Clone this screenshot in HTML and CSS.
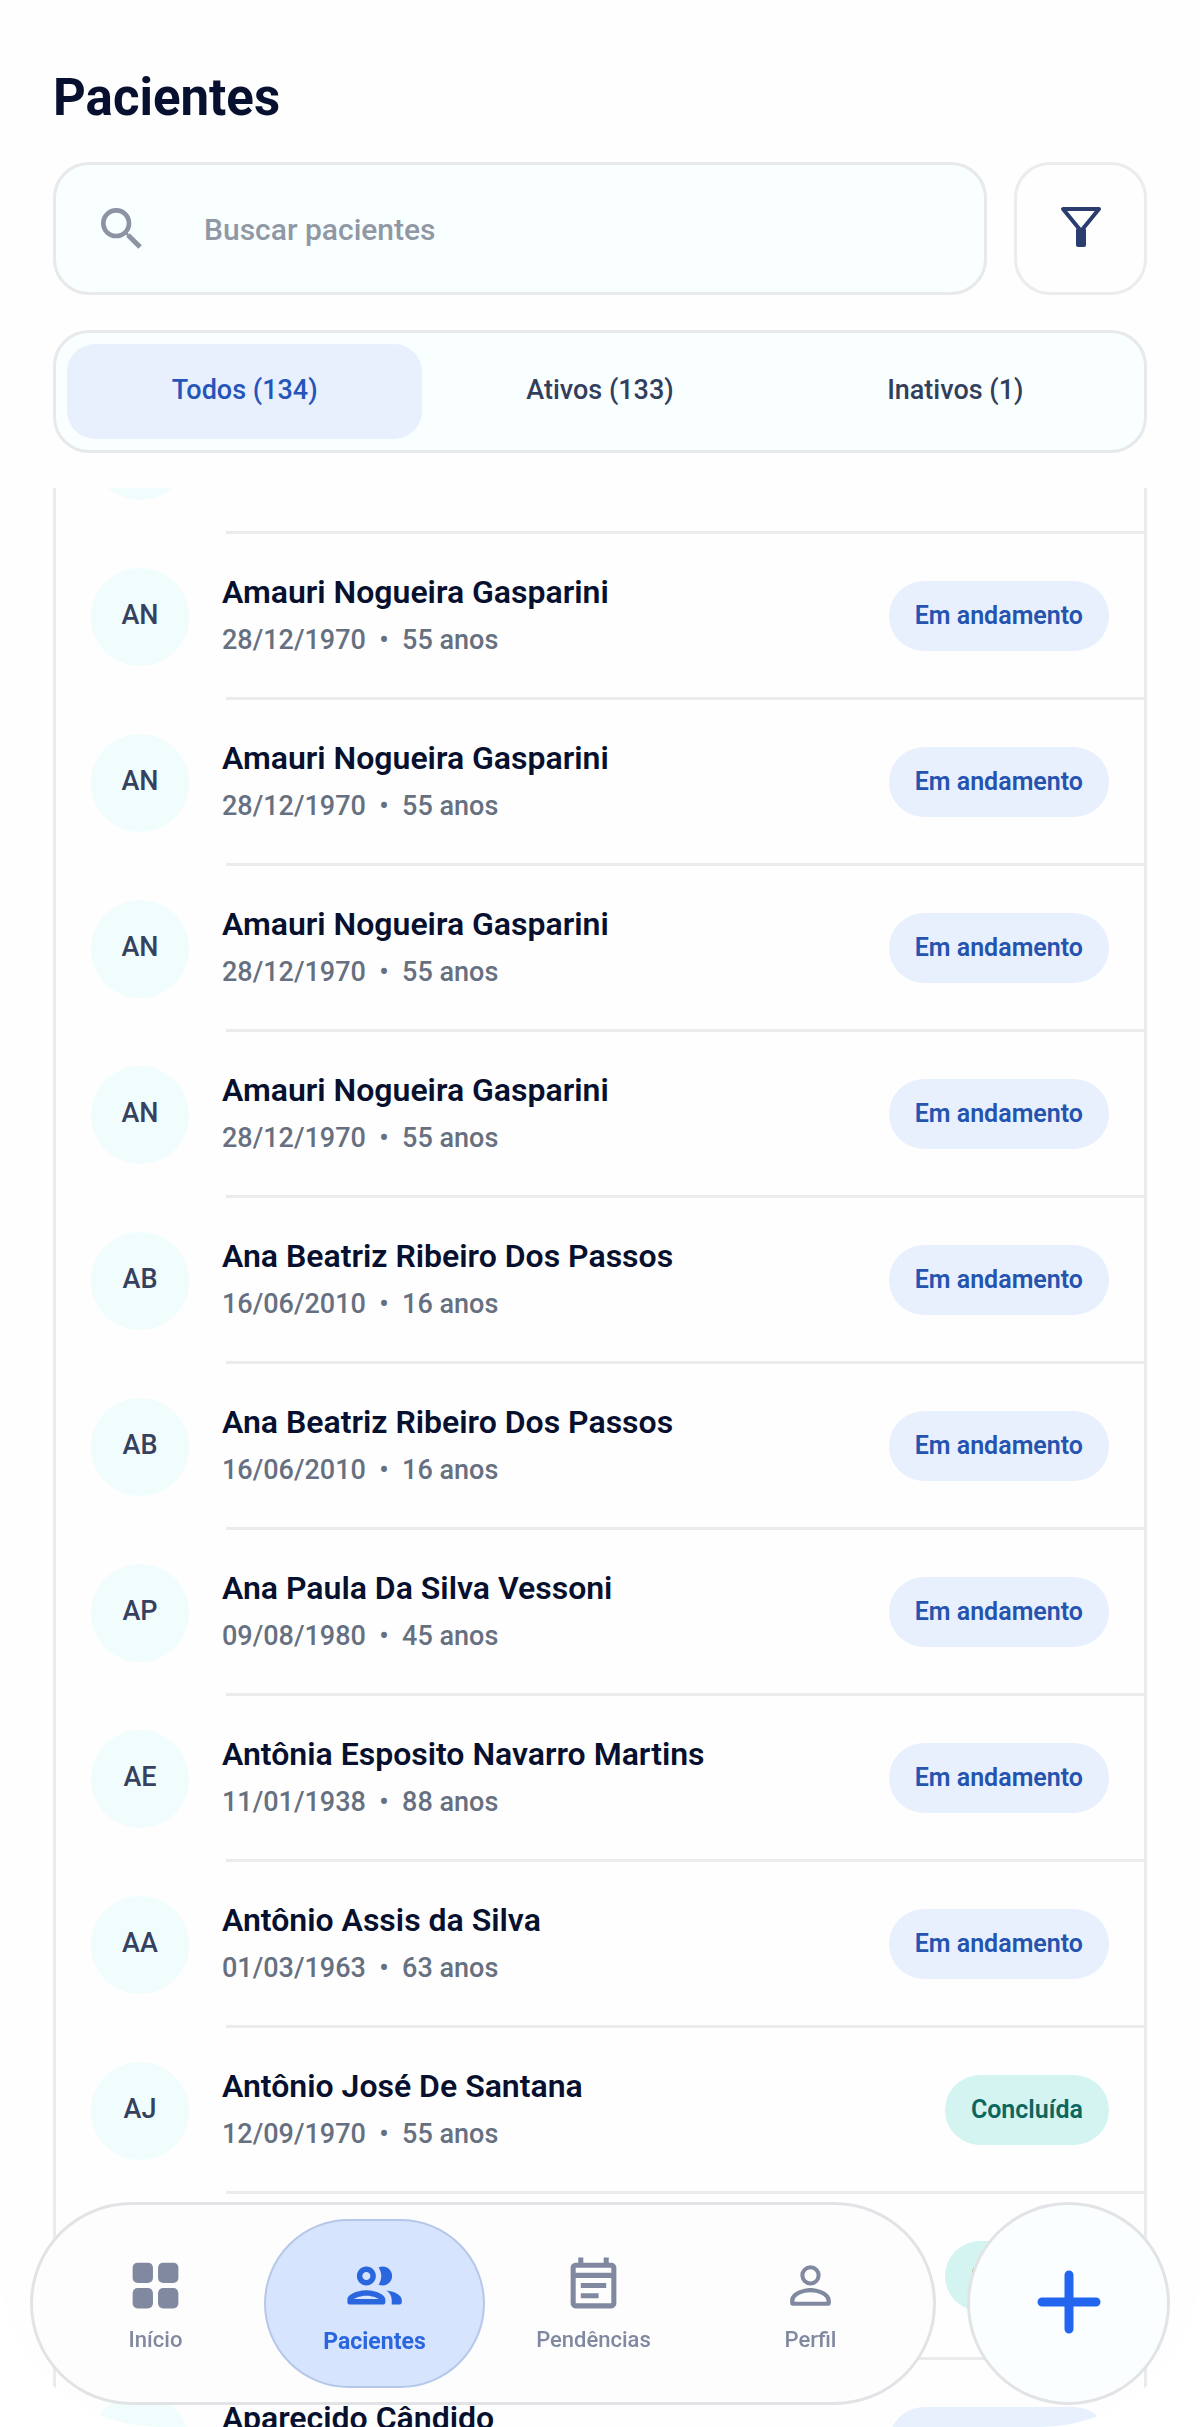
FILE: index.html
```html
<!DOCTYPE html>
<html lang="pt-BR">

<head>
    <meta charset="UTF-8">
    <meta name="viewport" content="width=device-width, initial-scale=1.0">
    <title>Pacientes</title>
    <link rel="stylesheet" href="styles.css">
</head>

<body>
    <div class="screen">
        <header class="header">
            <h1>Pacientes</h1>
            <div class="search-row">
                <label class="search">
                    <svg class="search-icon" viewBox="0 0 24 24" aria-hidden="true">
                        <path d="M15.5 14h-.79l-.28-.27A6.471 6.471 0 0 0 16 9.5 6.5 6.5 0 1 0 9.5 16c1.61 0 3.09-.59 4.23-1.57l.27.28v.79l5 4.99L20.49 19l-4.99-5zm-6 0C7.01 14 5 11.99 5 9.5S7.01 5 9.5 5 14 7.01 14 9.5 11.99 14 9.5 14z"/>
                    </svg>
                    <input type="search" placeholder="Buscar pacientes" aria-label="Buscar pacientes">
                </label>
                <button class="filter" aria-label="Filtrar">
                    <svg viewBox="0 0 42 42" aria-hidden="true">
                        <path d="M3 3h36L21 25z"/>
                        <rect class="filter-stem" x="16" y="22" width="10" height="19" rx="2"/>
                    </svg>
                </button>
            </div>
            <div class="tabs">
                <button class="tab active">Todos (134)</button>
                <button class="tab">Ativos (133)</button>
                <button class="tab">Inativos (1)</button>
            </div>
        </header>

        <main class="list-view">
            <ul class="list">
                <li class="patient">
                    <span class="avatar"></span>
                    <div class="info"></div>
                </li>
                <li class="patient">
                    <span class="avatar">AN</span>
                    <div class="info">
                        <div class="data">
                            <p class="name">Amauri Nogueira Gasparini</p>
                            <p class="birth">28/12/1970 &nbsp;•&nbsp; 55 anos</p>
                        </div>
                        <span class="status">Em andamento</span>
                    </div>
                </li>
                <li class="patient">
                    <span class="avatar">AN</span>
                    <div class="info">
                        <div class="data">
                            <p class="name">Amauri Nogueira Gasparini</p>
                            <p class="birth">28/12/1970 &nbsp;•&nbsp; 55 anos</p>
                        </div>
                        <span class="status">Em andamento</span>
                    </div>
                </li>
                <li class="patient">
                    <span class="avatar">AN</span>
                    <div class="info">
                        <div class="data">
                            <p class="name">Amauri Nogueira Gasparini</p>
                            <p class="birth">28/12/1970 &nbsp;•&nbsp; 55 anos</p>
                        </div>
                        <span class="status">Em andamento</span>
                    </div>
                </li>
                <li class="patient">
                    <span class="avatar">AN</span>
                    <div class="info">
                        <div class="data">
                            <p class="name">Amauri Nogueira Gasparini</p>
                            <p class="birth">28/12/1970 &nbsp;•&nbsp; 55 anos</p>
                        </div>
                        <span class="status">Em andamento</span>
                    </div>
                </li>
                <li class="patient">
                    <span class="avatar">AB</span>
                    <div class="info">
                        <div class="data">
                            <p class="name">Ana Beatriz Ribeiro Dos Passos</p>
                            <p class="birth">16/06/2010 &nbsp;•&nbsp; 16 anos</p>
                        </div>
                        <span class="status">Em andamento</span>
                    </div>
                </li>
                <li class="patient">
                    <span class="avatar">AB</span>
                    <div class="info">
                        <div class="data">
                            <p class="name">Ana Beatriz Ribeiro Dos Passos</p>
                            <p class="birth">16/06/2010 &nbsp;•&nbsp; 16 anos</p>
                        </div>
                        <span class="status">Em andamento</span>
                    </div>
                </li>
                <li class="patient">
                    <span class="avatar">AP</span>
                    <div class="info">
                        <div class="data">
                            <p class="name">Ana Paula Da Silva Vessoni</p>
                            <p class="birth">09/08/1980 &nbsp;•&nbsp; 45 anos</p>
                        </div>
                        <span class="status">Em andamento</span>
                    </div>
                </li>
                <li class="patient">
                    <span class="avatar">AE</span>
                    <div class="info">
                        <div class="data">
                            <p class="name">Antônia Esposito Navarro Martins</p>
                            <p class="birth">11/01/1938 &nbsp;•&nbsp; 88 anos</p>
                        </div>
                        <span class="status">Em andamento</span>
                    </div>
                </li>
                <li class="patient">
                    <span class="avatar">AA</span>
                    <div class="info">
                        <div class="data">
                            <p class="name">Antônio Assis da Silva</p>
                            <p class="birth">01/03/1963 &nbsp;•&nbsp; 63 anos</p>
                        </div>
                        <span class="status">Em andamento</span>
                    </div>
                </li>
                <li class="patient">
                    <span class="avatar">AJ</span>
                    <div class="info">
                        <div class="data">
                            <p class="name">Antônio José De Santana</p>
                            <p class="birth">12/09/1970 &nbsp;•&nbsp; 55 anos</p>
                        </div>
                        <span class="status done">Concluída</span>
                    </div>
                </li>
                <li class="patient">
                    <span class="avatar"></span>
                    <div class="info">
                        <div class="data"></div>
                        <span class="status done">Concluída</span>
                    </div>
                </li>
                <li class="patient">
                    <span class="avatar"></span>
                    <div class="info">
                        <div class="data">
                            <p class="name">Aparecido Cândido</p>
                            <p class="birth">&nbsp;</p>
                        </div>
                        <span class="status">Em andamento</span>
                    </div>
                </li>
            </ul>
        </main>
    </div>

    <div class="bottom-bar">
        <nav class="nav">
            <a class="nav-item" href="#inicio">
                <svg viewBox="0 0 24 24" aria-hidden="true">
                    <rect x="3" y="3" width="8" height="8" rx="2"/>
                    <rect x="13" y="3" width="8" height="8" rx="2"/>
                    <rect x="3" y="13" width="8" height="8" rx="2"/>
                    <rect x="13" y="13" width="8" height="8" rx="2"/>
                </svg>
                Início
            </a>
            <a class="nav-item active" href="#pacientes">
                <svg viewBox="0 0 24 24" aria-hidden="true">
                    <path d="M9 13.750c-2.340 0-7 1.170-7 3.500V18.300c0 .4.300.7.700.7h12.600c.4 0 .7-.3.700-.7v-1.050c0-2.330-4.660-3.500-7-3.500zM4.340 17c.84-.58 2.870-1.250 4.660-1.250s3.820.67 4.660 1.250H4.340z"/>
                    <path d="M9 12c1.930 0 3.500-1.570 3.500-3.500S10.930 5 9 5 5.500 6.570 5.500 8.500 7.070 12 9 12zm0-5c.83 0 1.500.67 1.500 1.500S9.830 10 9 10s-1.500-.67-1.500-1.500S8.170 7 9 7z"/>
                    <path d="M16.400 13.810c1.160.84 1.960 1.960 1.960 3.440V19h3c.4 0 .7-.3.700-.7v-1.050c0-2.020-3.200-3.170-5.660-3.440zM15 12c1.930 0 3.500-1.570 3.500-3.500S16.930 5 15 5c-.54 0-1.040.130-1.500.35.630.89 1 1.980 1 3.150s-.37 2.260-1 3.150c.46.220.96.350 1.500.350z"/>
                </svg>
                Pacientes
            </a>
            <a class="nav-item" href="#pendencias">
                <svg viewBox="0 0 24 24" aria-hidden="true">
                    <path d="M19 3h-1V1h-2v2H8V1H6v2H5c-1.100 0-2 .9-2 2v14c0 1.100.9 2 2 2h14c1.100 0 2-.9 2-2V5c0-1.100-.9-2-2-2zm0 16H5V9h14zm0-12H5V5h14zM7 11h10v2H7zm0 4h7v2H7z"/>
                </svg>
                Pendências
            </a>
            <a class="nav-item" href="#perfil">
                <svg viewBox="0 0 24 24" aria-hidden="true">
                    <path d="M12 4a4 4 0 1 0 0 8 4 4 0 0 0 0-8zm0 1.600a2.400 2.400 0 1 1 0 4.800 2.400 2.400 0 0 1 0-4.800z"/>
                    <path d="M12 13c-2.700 0-8 1.500-8 5v1c0 .6.4 1 1 1h14c.6 0 1-.4 1-1v-1c0-3.500-5.300-5-8-5zm6.300 5.400H5.700V18c0-2 3.600-3.300 6.300-3.300s6.300 1.300 6.300 3.300z"/>
                </svg>
                Perfil
            </a>
        </nav>
        <button class="fab" aria-label="Adicionar paciente">
            <svg viewBox="0 0 64 64" aria-hidden="true">
                <path d="M32 5v54M5 32h54"/>
            </svg>
        </button>
    </div>
</body>

</html>
```

FILE: styles.css
```css
* {
    box-sizing: border-box;
}

body {
    margin: 0;
    font-family: Roboto, "Liberation Sans", sans-serif;
    font-weight: 500;
    color: #07102e;
    background-color: #fff;
}

h1,
p,
ul {
    margin: 0;
    padding: 0;
}

button,
input {
    font: inherit;
}

button {
    padding: 0;
    cursor: pointer;
}

.screen {
    display: flex;
    flex-direction: column;
    height: 100vh;
    background-color: #fefefe;
    border-radius: 0 0 160px 160px;
    overflow: hidden;
}

.header {
    padding: 68px 53px 35px;
}

h1 {
    font-size: 51px;
    line-height: 60px;
    font-weight: 700;
}

.search-row {
    display: flex;
    gap: 27px;
    margin-top: 34px;
}

.search {
    flex: 1;
    display: flex;
    align-items: center;
    gap: 54px;
    height: 133px;
    padding: 0 38px;
    background-color: #f9feff;
    border: 3px solid #e8e9ec;
    border-radius: 36px;
}

.search-icon {
    width: 56px;
    height: 56px;
    fill: #8c94a3;
}

.search input {
    flex: 1;
    min-width: 0;
    padding: 2px 0 0;
    border: none;
    outline: none;
    background: none;
    font-size: 30px;
}

.search input::placeholder {
    color: #8f98a4;
    opacity: 1;
}

.filter {
    width: 133px;
    height: 133px;
    background-color: #fefefe;
    border: 3px solid #ececef;
    border-radius: 36px;
}

.filter svg {
    width: 42px;
    height: 42px;
    fill: none;
    stroke: #2a3d6e;
    stroke-width: 4;
    stroke-linejoin: round;
}

.filter .filter-stem {
    fill: #2a3d6e;
    stroke: none;
}

.tabs {
    display: flex;
    margin-top: 35px;
    padding: 11px;
    background-color: #f9feff;
    border: 3px solid #e8e9ec;
    border-radius: 36px;
}

.tab {
    flex: 1;
    height: 95px;
    padding-bottom: 4px;
    border: none;
    border-radius: 28px;
    background: none;
    color: #323f5c;
    font-size: 27px;
}

.tab.active {
    background-color: #e8effd;
    color: #2555b8;
}

.list-view {
    flex: 1;
    min-height: 0;
    margin: 0 53px;
    border: solid #ebebee;
    border-width: 0 3px;
    overflow: hidden;
}

/* scrolled a little past the first patient */
.list {
    margin-top: -120px;
    list-style: none;
}

.patient {
    display: flex;
    align-items: center;
    gap: 37px;
    height: 166px;
    padding-left: 35px;
}

.avatar {
    display: flex;
    align-items: center;
    justify-content: center;
    width: 98px;
    height: 98px;
    padding-bottom: 4px;
    border-radius: 50%;
    background-color: #f1fcfc;
    color: #35415f;
    font-size: 27px;
}

.info {
    flex: 1;
    display: flex;
    align-items: center;
    justify-content: space-between;
    height: 100%;
    padding-right: 35px;
    border-bottom: 3px solid #ebebee;
}

/* the divider starts a little after the text */
.data {
    margin-left: -4px;
}

.name {
    font-size: 32px;
    line-height: 48px;
    font-weight: 600;
}

.birth {
    color: #667080;
    font-size: 27px;
    line-height: 48px;
}

.status {
    padding: 0 26px;
    border-radius: 35px;
    background-color: #e8f0fd;
    color: #2553b0;
    font-size: 25px;
    line-height: 70px;
    font-weight: 600;
}

.status.done {
    background-color: #d3f4f0;
    color: #0d665e;
}

.bottom-bar {
    position: fixed;
    left: 30px;
    right: 30px;
    bottom: 22px;
    display: flex;
    gap: 31px;
}

.nav {
    flex: 1;
    display: flex;
    padding: 14px;
    background-color: #fdfdfd;
    border: 3px solid #e2e3e6;
    border-radius: 102px;
}

.nav-item {
    flex: 1;
    display: flex;
    flex-direction: column;
    align-items: center;
    gap: 12px;
    height: 169px;
    padding-top: 36px;
    border-radius: 85px;
    color: #8089a0;
    font-size: 22px;
    line-height: 24px;
    text-decoration: none;
}

.nav-item svg {
    width: 61px;
    height: 61px;
    fill: currentColor;
}

.nav-item.active {
    gap: 12px;
    padding-top: 32px;
    background-color: #d6e4fd;
    border: 2px solid #b6c8ea;
    color: #2a66de;
    font-size: 23px;
    font-weight: 700;
}

.nav-item.active svg {
    width: 65px;
    height: 65px;
}

.fab {
    width: 203px;
    height: 203px;
    background-color: #fbfeff;
    border: 3px solid #e2e3e6;
    border-radius: 50%;
}

.fab svg {
    width: 64px;
    height: 64px;
    fill: none;
    stroke: #2266f0;
    stroke-width: 9;
    stroke-linecap: round;
}
```
